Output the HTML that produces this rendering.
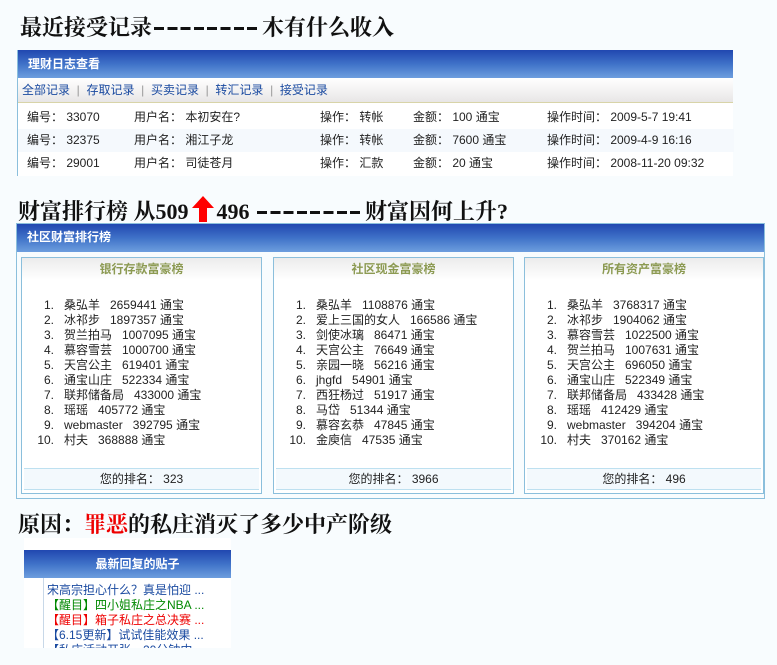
<!DOCTYPE html>
<html><head><meta charset="utf-8">
<style>
*{margin:0;padding:0;box-sizing:border-box}
body{width:777px;height:665px;background:#f8fcfe;position:relative;overflow:hidden;font-family:"Liberation Sans","Noto Sans CJK SC",sans-serif;font-size:12px;color:#222}
.ab{position:absolute}
.t{font-family:"Liberation Serif","Noto Serif CJK SC",serif;font-weight:bold;font-size:22px;color:#111;white-space:nowrap;line-height:24px}
.d{display:inline-block;width:106px;height:3px;margin:0 2px;background:repeating-linear-gradient(90deg,#111 0 10px,transparent 10px 13.3px);vertical-align:middle;position:relative;top:-1px}
.hdr{background:linear-gradient(#2148b0,#3f72c8 50%,#6d9ede);color:#fff;font-weight:bold;font-size:12px}
.row{position:absolute;left:0;width:716px;height:23px;line-height:23px}
.row span{position:absolute}
.panel{position:absolute;top:33px;width:241px;height:237px;border:1px solid #8bbfdc;background:#fff}
.ph{height:22px;background:linear-gradient(#ececec,#fff);text-align:center;line-height:22px;color:#8c9a52;font-weight:bold;font-size:12px}
.list{position:absolute;top:40px;left:0;line-height:15px;font-size:12px;white-space:nowrap}
.list div{position:relative;padding-left:42px}
.list b{font-weight:normal;position:absolute;right:calc(100% - 32px)}
.pf{position:absolute;left:2px;right:2px;bottom:3px;height:22px;background:#f3f9fd;border-top:1px solid #bde0f0;border-bottom:1px solid #bde0f0;text-align:center;line-height:20px}
.lk a{display:block;white-space:nowrap;text-decoration:none}
</style></head><body>

<div class="ab t" style="left:20px;top:16px">最近接受记录<span class="d"></span>木有什么收入</div>

<div class="ab" style="left:17px;top:50px;width:716px;height:126px;background:#fff;border-left:1px solid #8bbfdc">
 <div class="hdr" style="height:28px;line-height:28px;padding-left:10px">理财日志查看</div>
 <div style="height:25px;line-height:24px;background:linear-gradient(#fff,#e8e6e6);border-bottom:1px solid #d8d4a8;color:#1a4aa0;padding-left:4px;white-space:nowrap">全部记录 <span style="color:#999">&nbsp;|&nbsp;</span> 存取记录 <span style="color:#999">&nbsp;|&nbsp;</span> 买卖记录 <span style="color:#999">&nbsp;|&nbsp;</span> 转汇记录 <span style="color:#999">&nbsp;|&nbsp;</span> 接受记录</div>
 <div class="row" style="top:56px"><span style="left:9px">编号： 33070</span><span style="left:116px">用户名： 本初安在?</span><span style="left:302px">操作： 转帐</span><span style="left:395px">金额： 100 通宝</span><span style="left:529px">操作时间： 2009-5-7 19:41</span></div>
 <div class="row" style="top:79px;background:#f5f9fd"><span style="left:9px">编号： 32375</span><span style="left:116px">用户名： 湘江子龙</span><span style="left:302px">操作： 转帐</span><span style="left:395px">金额： 7600 通宝</span><span style="left:529px">操作时间： 2009-4-9 16:16</span></div>
 <div class="row" style="top:102px"><span style="left:9px">编号： 29001</span><span style="left:116px">用户名： 司徒苍月</span><span style="left:302px">操作： 汇款</span><span style="left:395px">金额： 20 通宝</span><span style="left:529px">操作时间： 2008-11-20 09:32</span></div>
</div>

<div class="ab t" style="left:18px;top:196px">财富排行榜 从509<svg width="22" height="26" viewBox="0 0 22 26" style="vertical-align:-3px;margin:0 3px"><path d="M11 0 L22 12 L15 12 L15 26 L7 26 L7 12 L0 12 Z" fill="#f00"/></svg>496 <span class="d"></span>财富因何上升?</div>

<div class="ab" style="left:16px;top:223px;width:749px;height:276px;border:1px solid #8bbfdc;background:#f8fcfe">
 <div class="hdr" style="height:28px;line-height:26px;padding-left:10px">社区财富排行榜</div>
 <div class="panel" style="left:4px">
  <div class="ph">银行存款富豪榜</div>
  <div class="list"><div><b>1.</b>桑弘羊 &nbsp; 2659441 通宝</div><div><b>2.</b>冰祁步 &nbsp; 1897357 通宝</div><div><b>3.</b>贺兰拍马 &nbsp; 1007095 通宝</div><div><b>4.</b>慕容雪芸 &nbsp; 1000700 通宝</div><div><b>5.</b>天宫公主 &nbsp; 619401 通宝</div><div><b>6.</b>通宝山庄 &nbsp; 522334 通宝</div><div><b>7.</b>联邦储备局 &nbsp; 433000 通宝</div><div><b>8.</b>瑶瑶 &nbsp; 405772 通宝</div><div><b>9.</b>webmaster &nbsp; 392795 通宝</div><div><b>10.</b>村夫 &nbsp; 368888 通宝</div></div>
  <div class="pf">您的排名： 323</div>
 </div>
 <div class="panel" style="left:256px">
  <div class="ph">社区现金富豪榜</div>
  <div class="list"><div><b>1.</b>桑弘羊 &nbsp; 1108876 通宝</div><div><b>2.</b>爱上三国的女人 &nbsp; 166586 通宝</div><div><b>3.</b>剑使冰璃 &nbsp; 86471 通宝</div><div><b>4.</b>天宫公主 &nbsp; 76649 通宝</div><div><b>5.</b>亲园一晓 &nbsp; 56216 通宝</div><div><b>6.</b>jhgfd &nbsp; 54901 通宝</div><div><b>7.</b>西狂杨过 &nbsp; 51917 通宝</div><div><b>8.</b>马岱 &nbsp; 51344 通宝</div><div><b>9.</b>慕容玄恭 &nbsp; 47845 通宝</div><div><b>10.</b>金庾信 &nbsp; 47535 通宝</div></div>
  <div class="pf">您的排名： 3966</div>
 </div>
 <div class="panel" style="left:507px;width:240px">
  <div class="ph">所有资产富豪榜</div>
  <div class="list"><div><b>1.</b>桑弘羊 &nbsp; 3768317 通宝</div><div><b>2.</b>冰祁步 &nbsp; 1904062 通宝</div><div><b>3.</b>慕容雪芸 &nbsp; 1022500 通宝</div><div><b>4.</b>贺兰拍马 &nbsp; 1007631 通宝</div><div><b>5.</b>天宫公主 &nbsp; 696050 通宝</div><div><b>6.</b>通宝山庄 &nbsp; 522349 通宝</div><div><b>7.</b>联邦储备局 &nbsp; 433428 通宝</div><div><b>8.</b>瑶瑶 &nbsp; 412429 通宝</div><div><b>9.</b>webmaster &nbsp; 394204 通宝</div><div><b>10.</b>村夫 &nbsp; 370162 通宝</div></div>
  <div class="pf">您的排名： 496</div>
 </div>
</div>

<div class="ab t" style="left:18px;top:513px">原因：<span style="color:#e00">罪恶</span>的私庄消灭了多少中产阶级</div>

<div class="ab" style="left:24px;top:538px;width:207px;height:110px;background:#fff;overflow:hidden">
 <div class="hdr" style="position:absolute;top:12px;left:0;width:207px;height:28px;line-height:28px;text-align:center;padding-left:20px">最新回复的贴子</div>
 <div style="position:absolute;left:19px;top:40px;width:1px;height:70px;background:#c8d8e8"></div>
 <div class="lk" style="position:absolute;left:23px;top:45px;line-height:15px;font-size:12px">
  <a style="color:#1a4aa0">宋高宗担心什么？真是怕迎 ...</a>
  <a style="color:#080">【醒目】四小姐私庄之NBA ...</a>
  <a style="color:#e00">【醒目】箱子私庄之总决赛 ...</a>
  <a style="color:#1a4aa0">【6.15更新】试试佳能效果 ...</a>
  <a style="color:#1a4aa0">【私庄活动开张，20分钟内 ...</a>
 </div>
</div>
</body></html>
